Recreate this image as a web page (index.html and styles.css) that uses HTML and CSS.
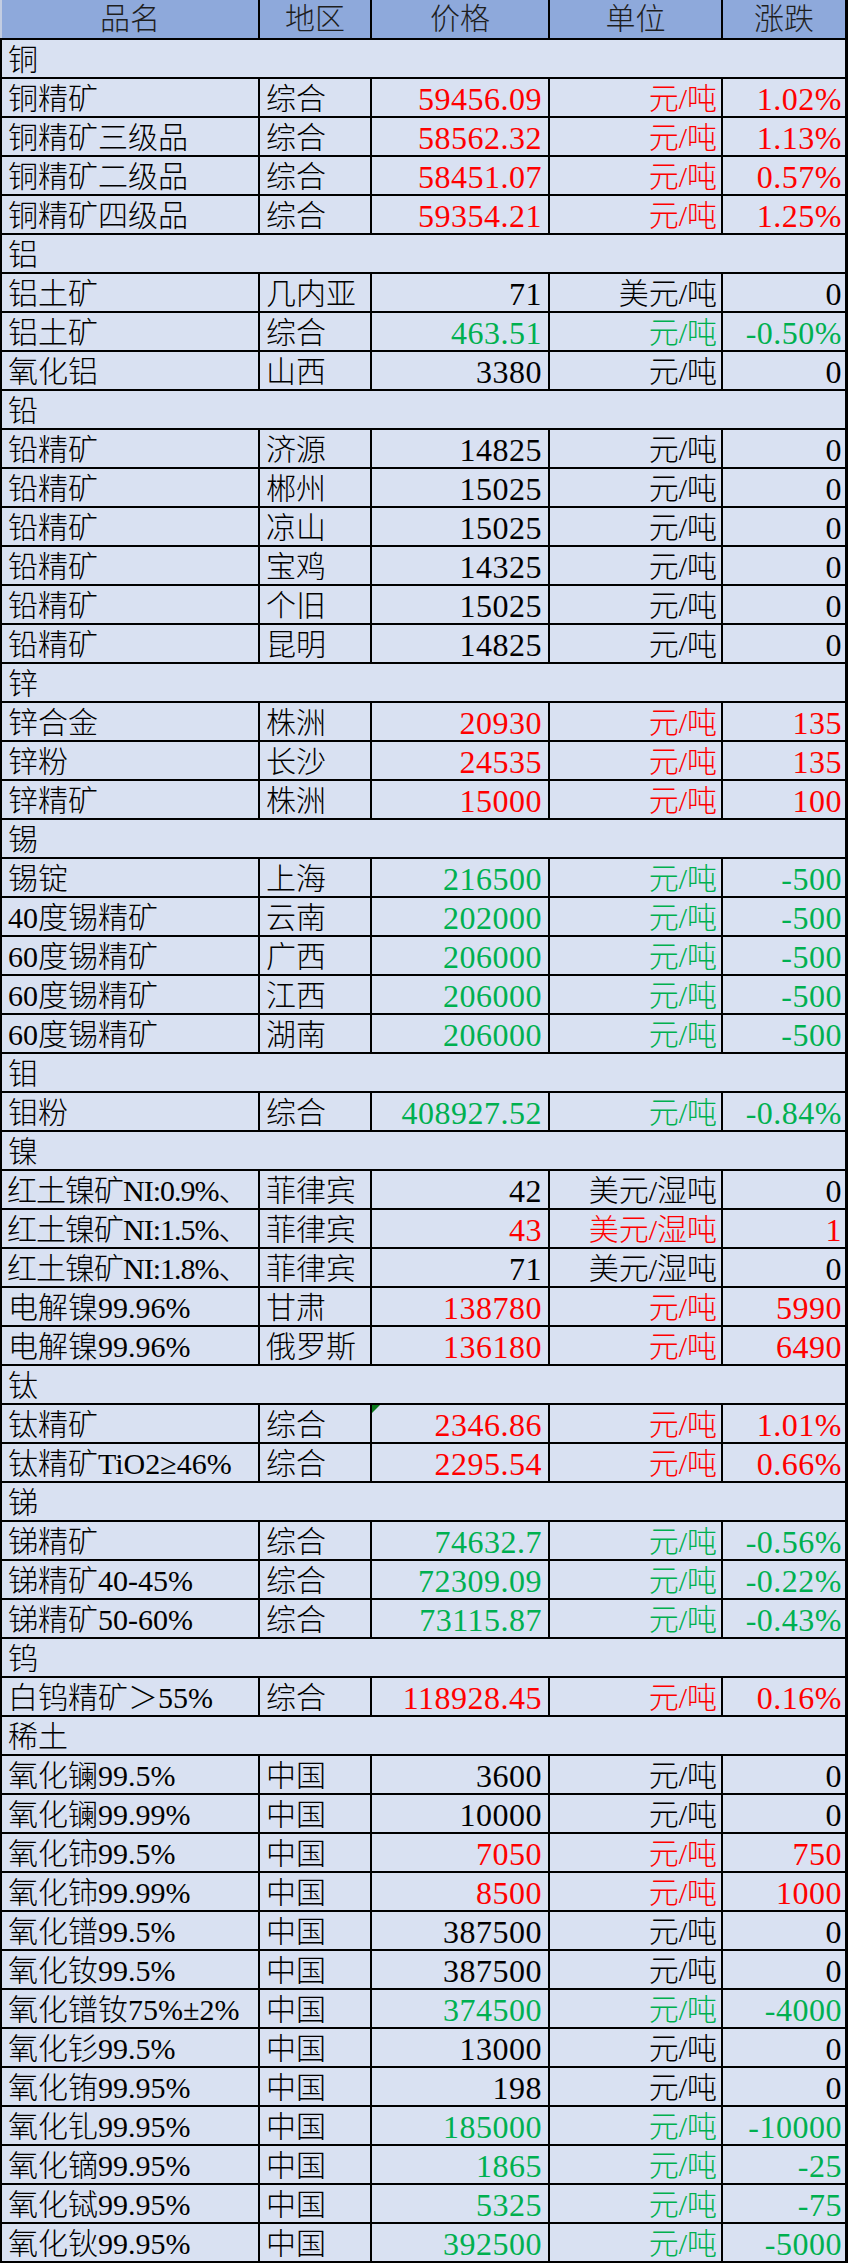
FILE: index.html
```html
<!DOCTYPE html>
<html lang="zh-CN">
<head>
<meta charset="utf-8">
<title>金属价格</title>
<link rel="stylesheet" href="styles.css">
</head>
<body>
<div class="sheet">
  <div class="r hd"><div>品名</div><div>地区</div><div>价格</div><div>单位</div><div>涨跌</div></div>

  <div class="g">铜</div>
  <div class="r up"><div class="t">铜精矿</div><div class="t">综合</div><div class="n p">59456.09</div><div class="n u">元/吨</div><div class="n z">1.02%</div></div>
  <div class="r up"><div class="t">铜精矿三级品</div><div class="t">综合</div><div class="n p">58562.32</div><div class="n u">元/吨</div><div class="n z">1.13%</div></div>
  <div class="r up"><div class="t">铜精矿二级品</div><div class="t">综合</div><div class="n p">58451.07</div><div class="n u">元/吨</div><div class="n z">0.57%</div></div>
  <div class="r up"><div class="t">铜精矿四级品</div><div class="t">综合</div><div class="n p">59354.21</div><div class="n u">元/吨</div><div class="n z">1.25%</div></div>

  <div class="g">铝</div>
  <div class="r"><div class="t">铝土矿</div><div class="t">几内亚</div><div class="n p">71</div><div class="n u">美元/吨</div><div class="n z">0</div></div>
  <div class="r dn"><div class="t">铝土矿</div><div class="t">综合</div><div class="n p">463.51</div><div class="n u">元/吨</div><div class="n z">-0.50%</div></div>
  <div class="r"><div class="t">氧化铝</div><div class="t">山西</div><div class="n p">3380</div><div class="n u">元/吨</div><div class="n z">0</div></div>

  <div class="g">铅</div>
  <div class="r"><div class="t">铅精矿</div><div class="t">济源</div><div class="n p">14825</div><div class="n u">元/吨</div><div class="n z">0</div></div>
  <div class="r"><div class="t">铅精矿</div><div class="t">郴州</div><div class="n p">15025</div><div class="n u">元/吨</div><div class="n z">0</div></div>
  <div class="r"><div class="t">铅精矿</div><div class="t">凉山</div><div class="n p">15025</div><div class="n u">元/吨</div><div class="n z">0</div></div>
  <div class="r"><div class="t">铅精矿</div><div class="t">宝鸡</div><div class="n p">14325</div><div class="n u">元/吨</div><div class="n z">0</div></div>
  <div class="r"><div class="t">铅精矿</div><div class="t">个旧</div><div class="n p">15025</div><div class="n u">元/吨</div><div class="n z">0</div></div>
  <div class="r"><div class="t">铅精矿</div><div class="t">昆明</div><div class="n p">14825</div><div class="n u">元/吨</div><div class="n z">0</div></div>

  <div class="g">锌</div>
  <div class="r up"><div class="t">锌合金</div><div class="t">株洲</div><div class="n p">20930</div><div class="n u">元/吨</div><div class="n z">135</div></div>
  <div class="r up"><div class="t">锌粉</div><div class="t">长沙</div><div class="n p">24535</div><div class="n u">元/吨</div><div class="n z">135</div></div>
  <div class="r up"><div class="t">锌精矿</div><div class="t">株洲</div><div class="n p">15000</div><div class="n u">元/吨</div><div class="n z">100</div></div>

  <div class="g">锡</div>
  <div class="r dn"><div class="t">锡锭</div><div class="t">上海</div><div class="n p">216500</div><div class="n u">元/吨</div><div class="n z">-500</div></div>
  <div class="r dn"><div class="t">40度锡精矿</div><div class="t">云南</div><div class="n p">202000</div><div class="n u">元/吨</div><div class="n z">-500</div></div>
  <div class="r dn"><div class="t">60度锡精矿</div><div class="t">广西</div><div class="n p">206000</div><div class="n u">元/吨</div><div class="n z">-500</div></div>
  <div class="r dn"><div class="t">60度锡精矿</div><div class="t">江西</div><div class="n p">206000</div><div class="n u">元/吨</div><div class="n z">-500</div></div>
  <div class="r dn"><div class="t">60度锡精矿</div><div class="t">湖南</div><div class="n p">206000</div><div class="n u">元/吨</div><div class="n z">-500</div></div>

  <div class="g">钼</div>
  <div class="r dn"><div class="t">钼粉</div><div class="t">综合</div><div class="n p">408927.52</div><div class="n u">元/吨</div><div class="n z">-0.84%</div></div>

  <div class="g">镍</div>
  <div class="r"><div class="t tight">红土镍矿NI:0.9%、</div><div class="t">菲律宾</div><div class="n p">42</div><div class="n u">美元/湿吨</div><div class="n z">0</div></div>
  <div class="r up"><div class="t tight">红土镍矿NI:1.5%、</div><div class="t">菲律宾</div><div class="n p">43</div><div class="n u">美元/湿吨</div><div class="n z">1</div></div>
  <div class="r"><div class="t tight">红土镍矿NI:1.8%、</div><div class="t">菲律宾</div><div class="n p">71</div><div class="n u">美元/湿吨</div><div class="n z">0</div></div>
  <div class="r up"><div class="t">电解镍99.96%</div><div class="t">甘肃</div><div class="n p">138780</div><div class="n u">元/吨</div><div class="n z">5990</div></div>
  <div class="r up"><div class="t">电解镍99.96%</div><div class="t">俄罗斯</div><div class="n p">136180</div><div class="n u">元/吨</div><div class="n z">6490</div></div>

  <div class="g">钛</div>
  <div class="r up"><div class="t">钛精矿</div><div class="t">综合</div><div class="n p flag">2346.86</div><div class="n u">元/吨</div><div class="n z">1.01%</div></div>
  <div class="r up"><div class="t">钛精矿TiO2≥46%</div><div class="t">综合</div><div class="n p">2295.54</div><div class="n u">元/吨</div><div class="n z">0.66%</div></div>

  <div class="g">锑</div>
  <div class="r dn"><div class="t">锑精矿</div><div class="t">综合</div><div class="n p">74632.7</div><div class="n u">元/吨</div><div class="n z">-0.56%</div></div>
  <div class="r dn"><div class="t">锑精矿40-45%</div><div class="t">综合</div><div class="n p">72309.09</div><div class="n u">元/吨</div><div class="n z">-0.22%</div></div>
  <div class="r dn"><div class="t">锑精矿50-60%</div><div class="t">综合</div><div class="n p">73115.87</div><div class="n u">元/吨</div><div class="n z">-0.43%</div></div>

  <div class="g">钨</div>
  <div class="r up"><div class="t">白钨精矿＞55%</div><div class="t">综合</div><div class="n p">118928.45</div><div class="n u">元/吨</div><div class="n z">0.16%</div></div>

  <div class="g">稀土</div>
  <div class="r"><div class="t">氧化镧99.5%</div><div class="t">中国</div><div class="n p">3600</div><div class="n u">元/吨</div><div class="n z">0</div></div>
  <div class="r"><div class="t">氧化镧99.99%</div><div class="t">中国</div><div class="n p">10000</div><div class="n u">元/吨</div><div class="n z">0</div></div>
  <div class="r up"><div class="t">氧化铈99.5%</div><div class="t">中国</div><div class="n p">7050</div><div class="n u">元/吨</div><div class="n z">750</div></div>
  <div class="r up"><div class="t">氧化铈99.99%</div><div class="t">中国</div><div class="n p">8500</div><div class="n u">元/吨</div><div class="n z">1000</div></div>
  <div class="r"><div class="t">氧化镨99.5%</div><div class="t">中国</div><div class="n p">387500</div><div class="n u">元/吨</div><div class="n z">0</div></div>
  <div class="r"><div class="t">氧化钕99.5%</div><div class="t">中国</div><div class="n p">387500</div><div class="n u">元/吨</div><div class="n z">0</div></div>
  <div class="r dn"><div class="t">氧化镨钕75%±2%</div><div class="t">中国</div><div class="n p">374500</div><div class="n u">元/吨</div><div class="n z">-4000</div></div>
  <div class="r"><div class="t">氧化钐99.5%</div><div class="t">中国</div><div class="n p">13000</div><div class="n u">元/吨</div><div class="n z">0</div></div>
  <div class="r"><div class="t">氧化铕99.95%</div><div class="t">中国</div><div class="n p">198</div><div class="n u">元/吨</div><div class="n z">0</div></div>
  <div class="r dn"><div class="t">氧化钆99.95%</div><div class="t">中国</div><div class="n p">185000</div><div class="n u">元/吨</div><div class="n z">-10000</div></div>
  <div class="r dn"><div class="t">氧化镝99.95%</div><div class="t">中国</div><div class="n p">1865</div><div class="n u">元/吨</div><div class="n z">-25</div></div>
  <div class="r dn"><div class="t">氧化铽99.95%</div><div class="t">中国</div><div class="n p">5325</div><div class="n u">元/吨</div><div class="n z">-75</div></div>
  <div class="r dn"><div class="t">氧化钬99.95%</div><div class="t">中国</div><div class="n p">392500</div><div class="n u">元/吨</div><div class="n z">-5000</div></div>
</div>
</body>
</html>
```

FILE: styles.css
```css
html, body {
  margin: 0;
  padding: 0;
  background: #ffffff;
}

.sheet {
  display: grid;
  grid-template-columns: 256px 110px 176px 171px 122px;
  grid-template-rows: 38px;
  grid-auto-rows: 37px;
  gap: 2px;
  width: max-content;
  padding: 0 3px 2px 2px;
  background: #000000;
  font-family: "Liberation Serif", "Noto Sans CJK SC", serif;
  font-size: 30px;
  font-weight: 300;
  color: #000000;
}

.r {
  display: contents;
}

.r > div,
.g {
  background: #d9e1f2;
  display: flex;
  align-items: center;
  white-space: nowrap;
  overflow: hidden;
  line-height: 1;
  padding-top: 2px;
}

.g {
  grid-column: 1 / -1;
  padding-left: 6px;
}

.hd > div {
  background: #8ea9db;
  justify-content: center;
  color: #1e1e1e;
  padding-top: 0;
}

.hd > div:first-child {
  margin-left: -2px;
  border-left: 2px solid #c3cde2;
}

.t {
  padding-left: 6px;
}

.tight {
  letter-spacing: -1px;
  padding-left: 5px;
}

.n {
  justify-content: flex-end;
}

.p {
  padding-right: 6px;
  font-size: 32px;
  letter-spacing: 0.5px;
}

.u {
  padding-right: 4px;
}

.z {
  padding-right: 3px;
  font-size: 32px;
  letter-spacing: 0.5px;
}

.up .n {
  color: #ff0000;
}

.dn .n {
  color: #00b050;
}

.flag {
  position: relative;
}

.flag::before {
  content: "";
  position: absolute;
  left: 0;
  top: 0;
  width: 0;
  height: 0;
  border-top: 8px solid #0b7a1e;
  border-right: 8px solid transparent;
}
```
